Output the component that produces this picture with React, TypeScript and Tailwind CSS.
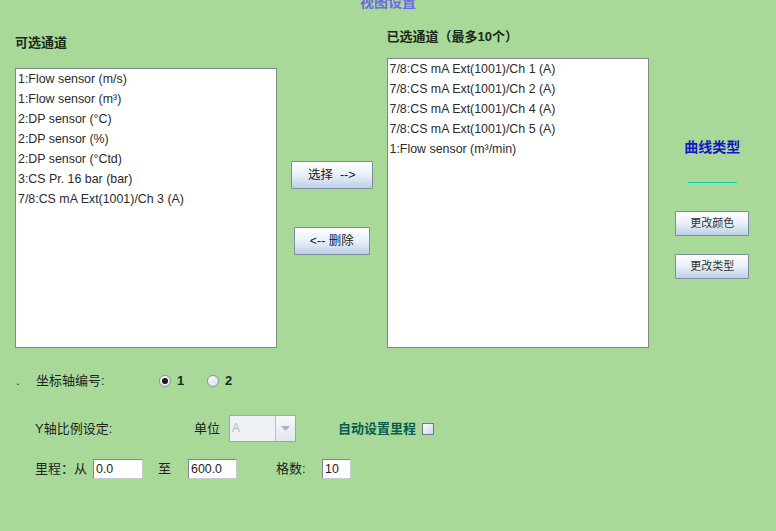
const available = [
  "1:Flow sensor (m/s)",
  "1:Flow sensor (m³)",
  "2:DP sensor (°C)",
  "2:DP sensor (%)",
  "2:DP sensor (°Ctd)",
  "3:CS Pr. 16 bar (bar)",
  "7/8:CS mA Ext(1001)/Ch 3 (A)",
];

const selected = [
  "7/8:CS mA Ext(1001)/Ch 1 (A)",
  "7/8:CS mA Ext(1001)/Ch 2 (A)",
  "7/8:CS mA Ext(1001)/Ch 4 (A)",
  "7/8:CS mA Ext(1001)/Ch 5 (A)",
  "1:Flow sensor (m³/min)",
];

const btn =
  "flex items-center justify-center border border-[#7d8ea3] bg-gradient-to-b from-[#ffffff] via-[#e8f0f9] to-[#bcd0e6] text-[#1a1a1a] rounded-[1px]";

function ChannelList({ items, height }: { items: string[]; height: string }) {
  return (
    <div className={`w-[262px] ${height} bg-white border border-[#7f8a8c]`}>
      {items.map((t) => (
        <div key={t} className="h-[20px] leading-[20px] pl-[2px] text-[12.4px] text-[#2a2a2a] whitespace-nowrap">
          {t}
        </div>
      ))}
    </div>
  );
}

function Radio({ checked, label }: { checked?: boolean; label: string }) {
  return (
    <div className="flex items-center w-[48px]">
      <div className="w-[12px] h-[12px] rounded-full border border-[#8a9098] bg-gradient-to-br from-[#ffffff] to-[#d4dde8] flex items-center justify-center">
        {checked && <div className="w-[6px] h-[6px] rounded-full bg-[#1a1a1a]" />}
      </div>
      <span className="ml-[6px] font-bold text-[13px] text-[#1e2a1e]">{label}</span>
    </div>
  );
}

function Field({ value, width }: { value: string; width: string }) {
  return (
    <div className={`${width} h-[20px] bg-white border border-[#7f8a8c] border-r-[#c4ccd0] border-b-[#c4ccd0] pl-[2px] leading-[18px] text-[12.4px] text-[#222]`}>
      {value}
    </div>
  );
}

export default function App() {
  return (
    <div
      className="w-[776px] h-[531px] overflow-hidden bg-[#a8d998] flex flex-col text-[#1f1f1f]"
      style={{ fontFamily: "'Liberation Sans', 'Noto Sans CJK SC', sans-serif" }}
    >
      {/* title, half cut off like the window */}
      <div className="-mt-[6px] h-[16px] leading-[16px] text-center text-[14px] font-bold text-[#6a6ae4]">
        视图设置
      </div>

      {/* channel lists */}
      <div className="flex items-start">
        <div className="ml-[15px] mt-[25px] flex flex-col">
          <div className="h-[16px] leading-[16px] text-[13px] font-bold text-[#1a2a1a]">可选通道</div>
          <div className="mt-[17px]">
            <ChannelList items={available} height="h-[280px]" />
          </div>
        </div>

        <div className="w-[110px] flex flex-col items-center pt-[151px]">
          <div className={`${btn} w-[82px] h-[28px] text-[12.5px]`}>选择&nbsp;&nbsp;--&gt;</div>
          <div className={`${btn} mt-[38px] w-[76px] h-[28px] text-[12.5px]`}>&lt;-- 删除</div>
        </div>

        <div className="mt-[19px] flex flex-col">
          <div className="h-[16px] leading-[16px] text-[13px] font-bold text-[#1a2a1a]">已选通道（最多10个）</div>
          <div className="mt-[13px]">
            <ChannelList items={selected} height="h-[290px]" />
          </div>
        </div>

        <div className="w-[128px] flex flex-col items-center pt-[129px]">
          <div className="h-[16px] leading-[16px] text-[14px] font-bold text-[#1414c8]">曲线类型</div>
          <div className="mt-[27px] w-[49px] h-[1px] bg-[#10d0b4]" />
          <div className={`${btn} mt-[28px] w-[74px] h-[25px] text-[11px] text-[#333]`}>更改颜色</div>
          <div className={`${btn} mt-[18px] w-[74px] h-[25px] text-[11px] text-[#333]`}>更改类型</div>
        </div>
      </div>

      {/* axis number */}
      <div className="mt-[21px] h-[24px] flex items-center pl-[16px] text-[13px]">
        <span className="w-[20px] text-[#333]">.</span>
        <span className="w-[123px]">坐标轴编号:</span>
        <Radio checked label="1" />
        <Radio label="2" />
      </div>

      {/* Y scale */}
      <div className="mt-[22px] h-[27px] flex items-center pl-[35px] text-[13px]">
        <span className="w-[159px]">Y轴比例设定:</span>
        <span className="w-[35px]">单位</span>
        <div className="w-[67px] h-[27px] flex border border-[#9aa6ac]">
          <div className="flex-1 bg-[#eef1f6] pl-[2px] leading-[25px] text-[12px] text-[#b4bcc6]">A</div>
          <div className="w-[20px] border-l border-[#b8c2c8] bg-gradient-to-b from-[#f6f8fb] to-[#e2e8ef] flex items-center justify-center">
            <svg width="9" height="5" viewBox="0 0 9 5">
              <path d="M0 0 L9 0 L4.5 5 Z" fill="#a8b2bc" />
            </svg>
          </div>
        </div>
        <span className="ml-[42px] font-bold text-[13px] text-[#0a5c50]">自动设置里程</span>
        <div className="ml-[6px] w-[12px] h-[12px] border border-[#6c7a88] bg-gradient-to-br from-[#ffffff] to-[#cdd8e6]" />
      </div>

      {/* range */}
      <div className="mt-[17px] h-[20px] flex items-center pl-[35px] text-[13px]">
        <span className="w-[58px]">里程：从</span>
        <Field value="0.0" width="w-[50px]" />
        <span className="ml-[15px] w-[30px]">至</span>
        <Field value="600.0" width="w-[49px]" />
        <span className="ml-[39px] w-[46px]">格数:</span>
        <Field value="10" width="w-[29px]" />
      </div>
    </div>
  );
}
